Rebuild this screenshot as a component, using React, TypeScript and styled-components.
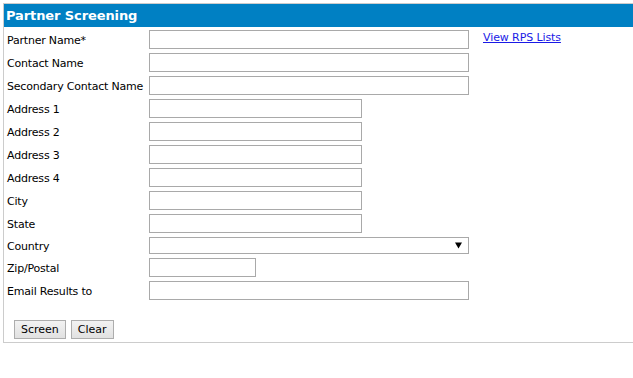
import { createGlobalStyle, styled } from 'styled-components';

interface FieldType {
  label: string;
  size: 'long' | 'medium' | 'short';
  kind?: 'select';
}

const fields: FieldType[] = [
  { label: 'Partner Name*', size: 'long' },
  { label: 'Contact Name', size: 'long' },
  { label: 'Secondary Contact Name', size: 'long' },
  { label: 'Address 1', size: 'medium' },
  { label: 'Address 2', size: 'medium' },
  { label: 'Address 3', size: 'medium' },
  { label: 'Address 4', size: 'medium' },
  { label: 'City', size: 'medium' },
  { label: 'State', size: 'medium' },
  { label: 'Country', size: 'long', kind: 'select' },
  { label: 'Zip/Postal', size: 'short' },
  { label: 'Email Results to', size: 'long' },
];

const widths = { long: 320, medium: 213, short: 107 };

const App = () => {
  return (
    <>
      <GlobalStyle />
      <Panel>
        <PanelHeader>Partner Screening</PanelHeader>
        <FormGrid>
          {fields.map((field, i) => (
            <FormRow key={field.label}>
              <Label>{field.label}</Label>
              <Cell>
                {field.kind === 'select' ? (
                  <SelectWrap>
                    <Select defaultValue="">
                      <option value=""></option>
                    </Select>
                    <Arrow>
                      <svg width="7" height="7" viewBox="0 0 7 7">
                        <path d="M0 0.5 L7 0.5 L3.5 6.5 Z" fill="#000" />
                      </svg>
                    </Arrow>
                  </SelectWrap>
                ) : (
                  <TextInput type="text" $width={widths[field.size]} />
                )}
              </Cell>
              <Side>{i === 0 && <SideLink href="#">View RPS Lists</SideLink>}</Side>
            </FormRow>
          ))}
        </FormGrid>
        <ButtonBar>
          <Button type="button">Screen</Button>
          <Button type="button">Clear</Button>
        </ButtonBar>
      </Panel>
    </>
  );
};

const GlobalStyle = createGlobalStyle`
  html, body {
    margin: 0;
    overflow: hidden;
    background: #fff;
  }
  body {
    padding: 3px 0 3px 3px;
    font-family: "DejaVu Sans", Verdana, sans-serif;
    font-size: 11px;
    color: #000;
  }
`;

const Panel = styled.div`
  border: 1px solid #cccccc;
  border-right-width: 0;
`;

const PanelHeader = styled.div`
  height: 23px;
  line-height: 23px;
  padding-left: 2px;
  background-color: #0080c3;
  color: #fff;
  font-weight: bold;
  font-size: 13px;
  letter-spacing: -0.1px;
`;

const FormGrid = styled.div`
  display: flex;
  flex-direction: column;
  padding-top: 1px;
`;

const FormRow = styled.div`
  display: grid;
  grid-template-columns: 145px 334px 1fr;
  align-items: center;
  padding: 2px 0;
`;

const Label = styled.div`
  padding-left: 3px;
  padding-top: 1px;
  white-space: nowrap;
  letter-spacing: -0.2px;
`;

const Cell = styled.div`
  display: flex;
  align-items: center;
`;

const TextInput = styled.input<{ $width: number }>`
  box-sizing: border-box;
  width: ${({ $width }) => $width}px;
  height: 19px;
  margin: 0;
  padding: 0 2px;
  border: 1px solid #a9a9a9;
  background: #fff;
  font: inherit;
`;

const SelectWrap = styled.div`
  position: relative;
  width: 320px;
  height: 17px;
`;

const Select = styled.select`
  box-sizing: border-box;
  appearance: none;
  width: 100%;
  height: 17px;
  margin: 0;
  padding: 0 2px;
  border: 1px solid #a9a9a9;
  border-radius: 0;
  background: #fff;
  font: inherit;
`;

const Arrow = styled.span`
  position: absolute;
  top: 5px;
  right: 7px;
  display: flex;
  pointer-events: none;
`;

const Side = styled.div`
  align-self: start;
  padding-top: 1px;
`;

const SideLink = styled.a`
  color: #1a1ae6;
  text-decoration: underline;
  letter-spacing: -0.1px;
`;

const ButtonBar = styled.div`
  display: flex;
  gap: 5px;
  padding: 18px 10px 3px;
`;

const Button = styled.button`
  height: 19px;
  padding: 0 6px;
  border: 1px solid #adadad;
  border-radius: 0;
  background: linear-gradient(#f2f2f2, #e1e1e1);
  color: #000;
  font: inherit;
  font-size: 11px;
`;

export default App;
